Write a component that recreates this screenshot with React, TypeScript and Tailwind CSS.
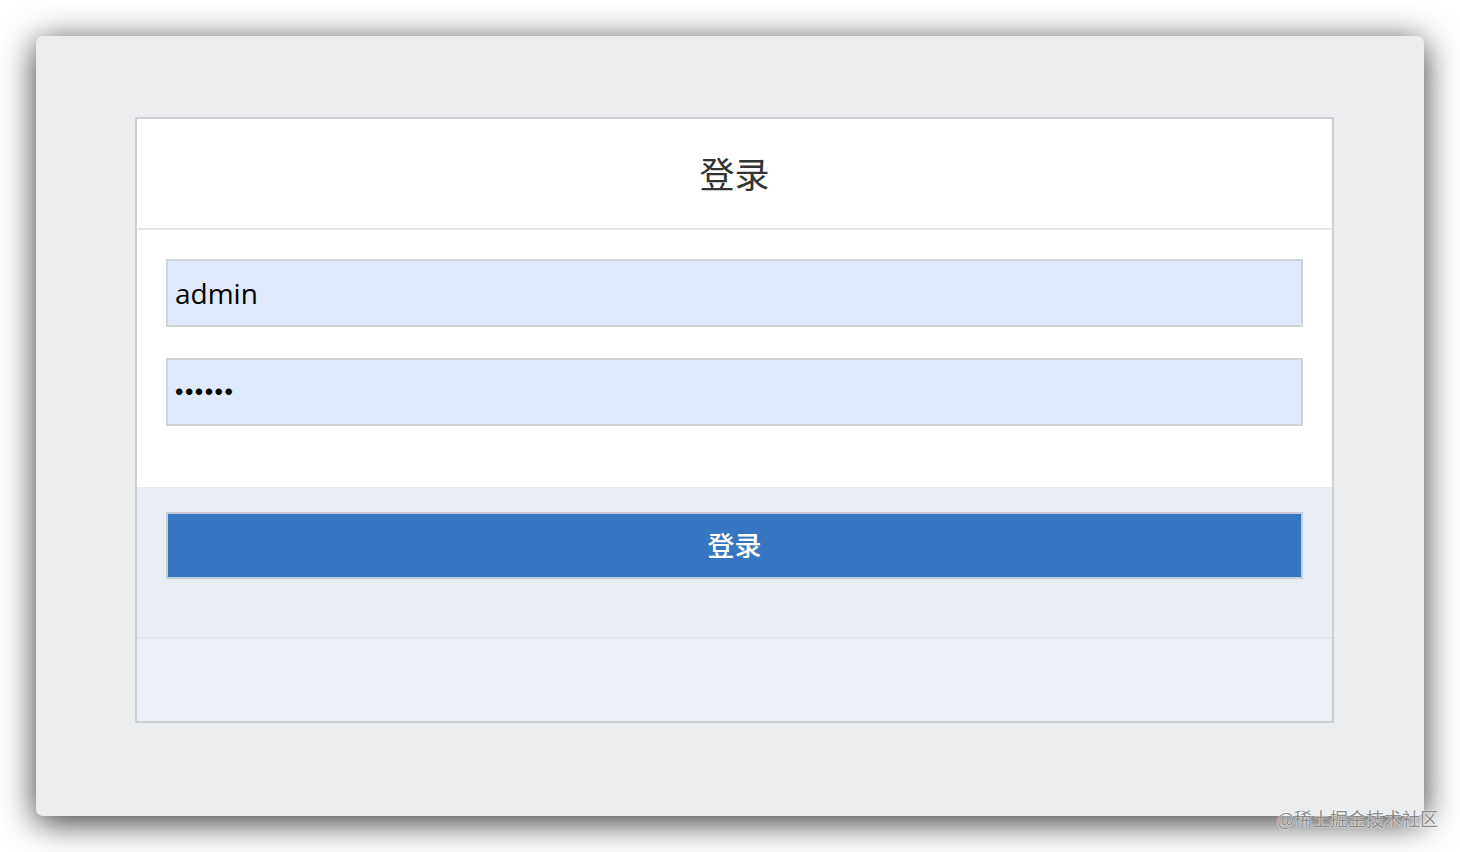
export default function App() {
  return (
    <div className="relative h-[852px] w-[1460px] overflow-hidden bg-white pl-[36px] pt-[36px] font-['Liberation_Sans','Noto_Sans_CJK_SC',sans-serif]">
      {/* window */}
      <div className="h-[780px] w-[1388px] rounded-[7px] bg-[#ecedef] pl-[99px] pt-[81px] shadow-[0_6px_34px_rgba(0,0,0,0.8)]">
        {/* login panel */}
        <div className="flex h-[606px] w-[1199px] flex-col border-2 border-[#cdcfd2] bg-white">
          <div className="flex h-[111px] items-center justify-center border-b-2 border-[#e2e4e6]">
            <span className="text-[35px] text-[#333] font-['Noto_Sans_CJK_SC',sans-serif]">登录</span>
          </div>

          <div className="flex flex-col gap-[31px] px-[29px] pt-[29px] pb-[61px]">
            <input
              className="h-[68px] w-full border-2 border-[#cfd2d6] bg-[#e1e9fc] px-[7px] text-[28px] text-black outline-none font-['Open_Sans',sans-serif]"
              defaultValue="admin"
              readOnly
            />
            <input
              type="password"
              className="h-[68px] w-full border-2 border-[#cfd2d6] bg-[#e1e9fc] px-[7px] text-[24px] tracking-[1.5px] text-black outline-none"
              defaultValue="123456"
              readOnly
            />
          </div>

          <div className="flex flex-col border-b-2 border-[#e1e6ed] bg-[#e9eef5] px-[29px] pt-[25px] pb-[58px]">
            <button className="flex h-[67px] w-full items-center justify-center border-2 border-[#c4ccd6] bg-[#3675c0] text-[27px] font-medium text-white font-['Noto_Sans_CJK_SC',sans-serif]">
              登录
            </button>
          </div>

          <div className="flex-1 bg-[#ebeff6]" />
        </div>
      </div>

      {/* watermark */}
      <div className="absolute left-[1277px] top-[805px] text-[18px] text-[#8a8a8a] [text-shadow:0_0_2px_#fff,0_0_1px_#fff] font-['Noto_Sans_CJK_SC',sans-serif]">
        @稀土掘金技术社区
      </div>
    </div>
  );
}
